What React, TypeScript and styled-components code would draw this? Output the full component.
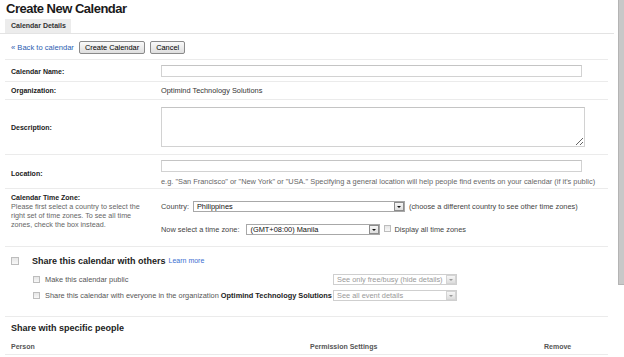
import React from "react";
import styled, { createGlobalStyle } from "styled-components";

const GlobalStyle = createGlobalStyle`
  html, body { margin: 0; padding: 0; background: #fff; }
  body {
    font-family: "Liberation Sans", Arial, sans-serif;
    color: #222;
    width: 624px;
    height: 357px;
    overflow: hidden;
  }
  * { box-sizing: border-box; }
`;

const Page = styled.div`
  position: relative;
  width: 624px;
  height: 357px;
  overflow: hidden;
`;

const Title = styled.h1`
  margin: 0;
  padding: 1px 0 0 6px;
  font-size: 13px;
  letter-spacing: -0.5px;
  line-height: 16px;
  font-weight: bold;
  color: #1a1a1a;
`;

const TabBar = styled.div`
  margin-top: 2px;
  width: 614px;
  display: flex;
  padding-left: 5px;
  border-bottom: 1px solid #e3e3e3;
`;

const Tab = styled.div`
  height: 14px;
  line-height: 14px;
  padding: 0 5px 0 6px;
  background: #ececec;
  font-size: 7px;
  font-weight: bold;
  color: #333;
`;

const Toolbar = styled.div`
  display: flex;
  align-items: center;
  padding: 7px 0 5px 11px;
`;

const Link = styled.a`
  font-size: 7.6px;
  color: #2a5db0;
  text-decoration: none;
  margin-right: 5px;
  cursor: pointer;
`;

const Button = styled.button`
  height: 13px;
  padding: 0 5px;
  margin: 0 5px 0 0;
  font-family: "Liberation Sans", Arial, sans-serif;
  font-size: 7.4px;
  line-height: 11px;
  color: #000;
  border: 1px solid #8a8a8a;
  border-radius: 2px;
  background: linear-gradient(#fafafa, #dedede);
`;

const Form = styled.div`
  margin-left: 5px;
  width: 603px;
  border-top: 1px solid #ebebeb;
`;

const Row = styled.div<{ $pad: string; $align?: string; $min?: number }>`
  display: grid;
  grid-template-columns: 156px 1fr;
  align-items: ${(p) => p.$align || "center"};
  padding: ${(p) => p.$pad};
  min-height: ${(p) => (p.$min ? `${p.$min}px` : "0")};
  border-bottom: 1px solid #ebebeb;
`;

const Label = styled.div`
  padding-left: 6px;
  font-size: 7px;
  line-height: 9px;
  font-weight: bold;
  color: #222;
`;

const LabelCol = styled.div`
  padding-top: 4px;
`;

const Help = styled.div`
  padding-left: 6px;
  font-size: 7.2px;
  line-height: 9px;
  color: #666;
`;

const Value = styled.div`
  font-size: 7.4px;
  color: #333;
`;

const TextInput = styled.input`
  display: block;
  width: 421px;
  height: 12px;
  padding: 0;
  margin: 0;
  border: 1px solid #d2d2d2;
  border-top-color: #c4c4c4;
  background: #fff;
`;

const TextArea = styled.textarea`
  display: block;
  width: 424px;
  height: 40px;
  padding: 0;
  margin: 0;
  border: 1px solid #d2d2d2;
  border-top-color: #c4c4c4;
  background: #fff;
  resize: both;
`;

const Hint = styled.div`
  margin-top: 5px;
  font-size: 7.4px;
  line-height: 10px;
  color: #666;
  white-space: nowrap;
`;

const TzCol = styled.div`
  padding-top: 12px;
  display: flex;
  flex-direction: column;
  gap: 12px;
`;

const TzLine = styled.div`
  display: flex;
  align-items: center;
  font-size: 7.4px;
  color: #444;
  white-space: nowrap;
`;

const TzLabel = styled.span<{ $gap: number }>`
  margin-right: ${(p) => p.$gap}px;
`;

const Select = styled.div<{ $width: number; $disabled?: boolean }>`
  display: flex;
  align-items: stretch;
  width: ${(p) => p.$width}px;
  height: 11px;
  border: 1px solid ${(p) => (p.$disabled ? "#cfcfcf" : "#a8a8a8")};
  background: #fff;
  font-size: 7.4px;
  color: ${(p) => (p.$disabled ? "#999" : "#111")};
`;

const SelectText = styled.span`
  flex: 1;
  padding-left: 3px;
  line-height: 9px;
  white-space: nowrap;
  overflow: hidden;
`;

const ArrowBox = styled.span<{ $disabled?: boolean }>`
  width: 10px;
  display: flex;
  align-items: center;
  justify-content: center;
  border: 1px solid ${(p) => (p.$disabled ? "#d4d4d4" : "#8c8c8c")};
  margin: 0;
  background: linear-gradient(#f6f6f6, #dddddd);
  &::after {
    content: "";
    width: 0;
    height: 0;
    border-left: 2px solid transparent;
    border-right: 2px solid transparent;
    border-top: 2.5px solid ${(p) => (p.$disabled ? "#999" : "#111")};
  }
`;

const After = styled.span<{ $gap: number }>`
  margin-left: ${(p) => p.$gap}px;
`;

const Check = styled.span<{ $size: number }>`
  display: inline-block;
  flex: none;
  width: ${(p) => p.$size}px;
  height: ${(p) => p.$size}px;
  border: 1px solid #bdbdbd;
  background: linear-gradient(#e6e6e6, #f8f8f8);
`;

const ShareSection = styled.div`
  padding: 9px 0 15px;
  border-bottom: 1px solid #ebebeb;
`;

const ShareHeader = styled.div`
  display: flex;
  align-items: center;
  height: 10px;
  padding-left: 6px;
  margin-bottom: 8px;
`;

const ShareTitle = styled.span`
  margin-left: 13px;
  font-size: 9px;
  font-weight: bold;
  color: #222;
  white-space: nowrap;
`;

const Learn = styled.a`
  margin-left: 3px;
  font-size: 7px;
  color: #3b6fd1;
  text-decoration: none;
  position: relative;
  top: -1px;
`;

const SubList = styled.div`
  display: flex;
  flex-direction: column;
  gap: 5px;
  padding-left: 28px;
`;

const SubRow = styled.div`
  display: grid;
  grid-template-columns: 300px 124px;
  align-items: center;
  height: 11px;
`;

const SubLabel = styled.div`
  display: flex;
  align-items: center;
  gap: 5px;
  font-size: 7.4px;
  color: #555;
  white-space: nowrap;
`;

const Strong = styled.b`
  color: #222;
`;

const SectionTitle = styled.div`
  padding: 6px 0 0 6px;
  font-size: 9px;
  line-height: 11px;
  font-weight: bold;
  color: #222;
`;

const TableHead = styled.div`
  margin-top: 5px;
  display: grid;
  grid-template-columns: 299px 234px 1fr;
  padding-left: 6px;
  height: 16px;
  align-items: center;
  border-bottom: 1px solid #ebebeb;
  font-size: 7px;
  font-weight: bold;
  color: #555;
`;

const ScrollThumb = styled.div`
  position: absolute;
  top: 0;
  right: 0;
  width: 6px;
  height: 285px;
  background: #c8c8c8;
  border-left: 1px solid #b4b4b4;
  border-bottom: 1px solid #b4b4b4;
`;

export default function App() {
  return (
    <Page>
      <GlobalStyle />
      <Title>Create New Calendar</Title>
      <TabBar>
        <Tab>Calendar Details</Tab>
      </TabBar>
      <Toolbar>
        <Link>« Back to calendar</Link>
        <Button>Create Calendar</Button>
        <Button>Cancel</Button>
      </Toolbar>
      <Form>
        <Row $pad="5px 0 4px">
          <Label>Calendar Name:</Label>
          <TextInput />
        </Row>
        <Row $pad="0" $min={18}>
          <Label>Organization:</Label>
          <Value>Optimind Technology Solutions</Value>
        </Row>
        <Row $pad="7px 0">
          <Label>Description:</Label>
          <TextArea />
        </Row>
        <Row $pad="5px 0 1px">
          <Label>Location:</Label>
          <div>
            <TextInput />
            <Hint>
              e.g. "San Francisco" or "New York" or "USA." Specifying a general location will help people find events on your calendar (if it's public)
            </Hint>
          </div>
        </Row>
        <Row $pad="0 0 11px" $align="start">
          <LabelCol>
            <Label>Calendar Time Zone:</Label>
            <Help>
              Please first select a country to select the
              <br />
              right set of time zones. To see all time
              <br />
              zones, check the box instead.
            </Help>
          </LabelCol>
          <TzCol>
            <TzLine>
              <TzLabel $gap={4}>Country:</TzLabel>
              <Select $width={212}>
                <SelectText>Philippines</SelectText>
                <ArrowBox />
              </Select>
              <After $gap={4}>(choose a different country to see other time zones)</After>
            </TzLine>
            <TzLine>
              <TzLabel $gap={7}>Now select a time zone:</TzLabel>
              <Select $width={134}>
                <SelectText>(GMT+08:00) Manila</SelectText>
                <ArrowBox />
              </Select>
              <After $gap={4}>
                <Check $size={7} />
              </After>
              <After $gap={3}>Display all time zones</After>
            </TzLine>
          </TzCol>
        </Row>
        <ShareSection>
          <ShareHeader>
            <Check $size={8} />
            <ShareTitle>Share this calendar with others</ShareTitle>
            <Learn>Learn more</Learn>
          </ShareHeader>
          <SubList>
            <SubRow>
              <SubLabel>
                <Check $size={7} />
                Make this calendar public
              </SubLabel>
              <Select $width={124} $disabled>
                <SelectText>See only free/busy (hide details)</SelectText>
                <ArrowBox $disabled />
              </Select>
            </SubRow>
            <SubRow>
              <SubLabel>
                <Check $size={7} />
                <span>
                  Share this calendar with everyone in the organization{" "}
                  <Strong>Optimind Technology Solutions</Strong>
                </span>
              </SubLabel>
              <Select $width={124} $disabled>
                <SelectText>See all event details</SelectText>
                <ArrowBox $disabled />
              </Select>
            </SubRow>
          </SubList>
        </ShareSection>
        <SectionTitle>Share with specific people</SectionTitle>
        <TableHead>
          <span>Person</span>
          <span>Permission Settings</span>
          <span>Remove</span>
        </TableHead>
      </Form>
      <ScrollThumb />
    </Page>
  );
}
